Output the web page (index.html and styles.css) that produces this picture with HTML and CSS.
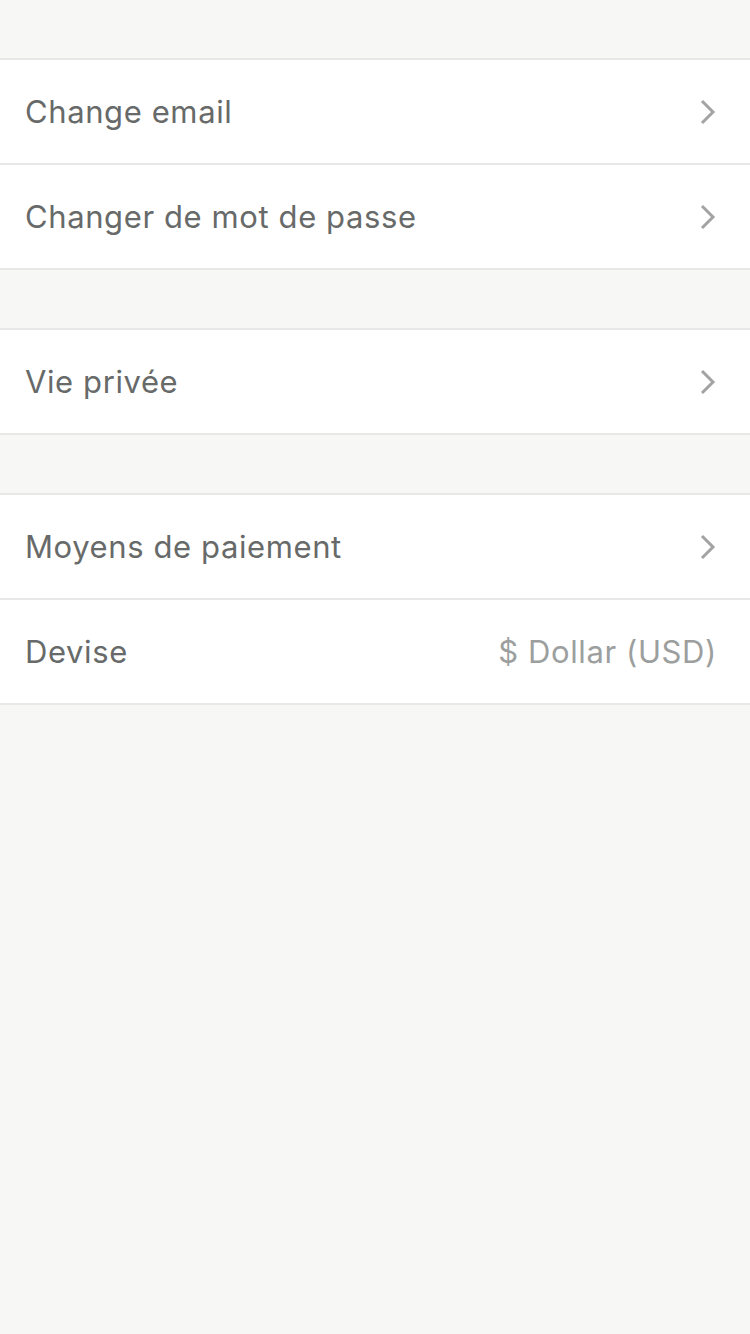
FILE: index.html
```html
<!DOCTYPE html>
<html>
<head>
<meta charset="utf-8">
<link rel="stylesheet" href="styles.css">
</head>
<body>
<div class="page">
  <div class="group">
    <div class="row"><span class="label">Change email</span><svg class="chev" viewBox="0 0 18 28"><path d="M3 3 L14 14 L3 25"/></svg></div>
    <div class="row"><span class="label">Changer de mot de passe</span><svg class="chev" viewBox="0 0 18 28"><path d="M3 3 L14 14 L3 25"/></svg></div>
  </div>
  <div class="group">
    <div class="row"><span class="label">Vie privée</span><svg class="chev" viewBox="0 0 18 28"><path d="M3 3 L14 14 L3 25"/></svg></div>
  </div>
  <div class="group">
    <div class="row"><span class="label">Moyens de paiement</span><svg class="chev" viewBox="0 0 18 28"><path d="M3 3 L14 14 L3 25"/></svg></div>
    <div class="row"><span class="label">Devise</span><span class="value">$ Dollar (USD)</span></div>
  </div>
</div>
</body>
</html>
```
FILE: styles.css
```css
html, body {
  margin: 0;
  padding: 0;
  background: #f7f7f5;
}
.page {
  width: 750px;
  min-height: 1334px;
  background: #f7f7f5;
  font-family: "Inter", "Roboto", sans-serif;
  padding-top: 58px;
  box-sizing: border-box;
  display: flex;
  flex-direction: column;
  gap: 58px;
}
.group {
  background: #fff;
  border-top: 2px solid #e8e8e6;
  border-bottom: 2px solid #e8e8e6;
}
.row {
  height: 103px;
  display: flex;
  align-items: center;
  justify-content: space-between;
  padding: 0 33px 0 25px;
}
.row + .row {
  border-top: 2px solid #e8e8e6;
}
.label {
  font-size: 31px;
  letter-spacing: 0.6px;
  color: #676a69;
}
.value {
  font-size: 31px;
  letter-spacing: 0.6px;
  color: #9c9f9e;
  margin-right: 0;
}
.chev {
  width: 18px;
  height: 28px;
  fill: none;
  stroke: #a3a3a3;
  stroke-width: 3;
}
```
